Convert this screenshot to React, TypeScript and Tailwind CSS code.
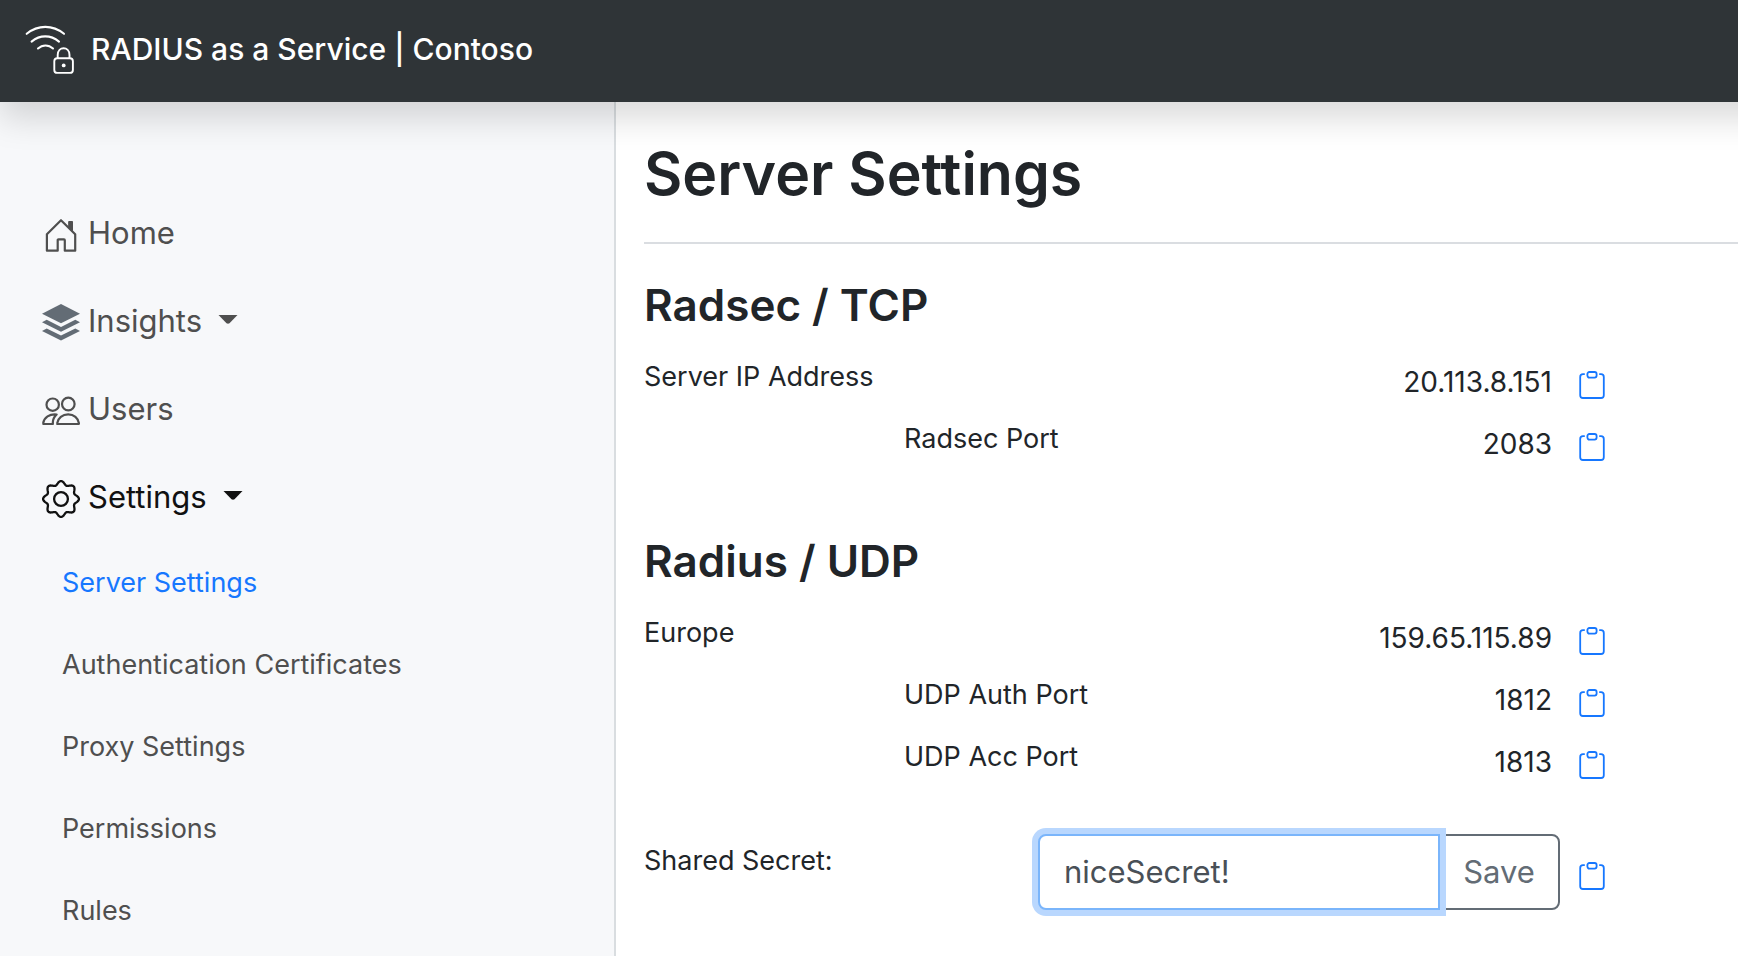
import { useState } from "react";
import type { ReactNode } from "react";

function LogoIcon() {
  return (
    <svg viewBox="0 0 52 50" className="h-[50px] w-[52px] shrink-0" fill="none" stroke="currentColor" strokeWidth="2.100" strokeLinecap="round" aria-hidden="true">
      <path d="M2.700 9.800C14 .6 28.600 .6 40 9.800" />
      <path d="M7.600 17.600C16 10.600 26.500 10.600 35 17.600" />
      <path d="M14 24.500C18.500 20.400 24.500 20.400 29 24.500" />
      <rect x="30.300" y="34.200" width="18.600" height="14.700" rx="3" strokeWidth="1.900" />
      <path d="M33.700 34V31C33.700 21.900 45.500 21.900 45.500 31V34" strokeWidth="1.900" />
      <circle cx="39.700" cy="41.400" r="1.900" fill="currentColor" stroke="none" />
    </svg>
  );
}

function HomeIcon() {
  return (
    <svg viewBox="0 0 38 38" className="size-[38px]" fill="none" stroke="currentColor" strokeWidth="2.200" strokeLinejoin="round" aria-hidden="true">
      <path d="M19 4.200L33.200 18.300V34.700H22.800V24.200C22.800 23.700 22.500 23.400 22 23.400H16.500C16 23.400 15.700 23.700 15.700 24.200V34.700H4.900V18.300Z" />
      <path d="M26.700 5.500H30.500V14.500L26.700 10.800Z" fill="currentColor" strokeWidth="1" />
    </svg>
  );
}

function LayersIcon() {
  return (
    <svg viewBox="0 0 38 38" className="size-[38px] text-[#636c75]" fill="currentColor" aria-hidden="true">
      <path d="M19 0L38 9.700L19 19.300L0 9.700Z" />
      <path d="M4.700 15.800L19 22.900L33.300 15.800L38 18.200L19 27.700L0 18.200Z" />
      <path d="M4.700 24.500L19 31.600L33.300 24.500L38 26.900L19 36.400L0 26.900Z" />
    </svg>
  );
}

function UsersIcon() {
  return (
    <svg viewBox="0 0 38 38" className="size-[38px]" fill="none" stroke="currentColor" strokeWidth="2.200" strokeLinejoin="round" aria-hidden="true">
      <circle cx="10.700" cy="12.700" r="6.200" />
      <circle cx="26.300" cy="12" r="6.300" />
      <path d="M15.500 32H36.300C36.800 32 37 31.700 36.900 31.200C36.200 26 31.900 22.400 26.200 22.400C20.500 22.400 15.900 26 15.200 31.200C15.100 31.700 15.200 32 15.500 32Z" />
      <path d="M14.600 22.500C7.500 21.800 2.100 25.400 1.200 31.200C1.100 31.700 1.300 32 1.800 32H10.900C10.500 28.500 11.700 25.200 14.600 22.500Z" />
    </svg>
  );
}

const gearOutline =
  Array.from({ length: 144 }, (_, i) => {
    const angle = (i * Math.PI) / 72;
    const radius = 16.1 + 1.8 * Math.cos(8 * angle);
    return `${i ? "L" : "M"}${(19 + radius * Math.sin(angle)).toFixed(2)} ${(19 - radius * Math.cos(angle)).toFixed(2)}`;
  }).join("") + "Z";

function GearIcon() {
  return (
    <svg viewBox="0 0 38 38" className="size-[38px]" fill="none" stroke="currentColor" strokeWidth="2.300" strokeLinejoin="round" aria-hidden="true">
      <path d={gearOutline} />
      <circle cx="19" cy="19" r="6.900" />
    </svg>
  );
}

function ClipboardIcon() {
  return (
    <svg viewBox="0 0 26 28" className="h-7 w-[26px]" fill="none" stroke="currentColor" strokeWidth="1.800" aria-hidden="true">
      <path d="M5.800 3.200H4C2.200 3.200 1.200 4.200 1.200 6V24.200C1.200 26 2.200 27 4 27H22C23.800 27 24.800 26 24.800 24.200V6C24.800 4.200 23.800 3.200 22 3.200H20.200" />
      <rect x="8.400" y="1" width="9.200" height="5.600" rx="2" />
    </svg>
  );
}

function Caret() {
  return (
    <svg viewBox="0 0 20 9" className="mb-1 ml-4 h-[9px] w-5" fill="currentColor" aria-hidden="true">
      <path d="M.5 0H19.500L11.500 8.300Q10 9 8.500 8.300Z" />
    </svg>
  );
}

const navItem = "flex h-[88px] w-full items-center pl-[42px] text-[31px] leading-10";

function NavContent({ icon, label }: { icon: ReactNode; label: string }) {
  return (
    <>
      <span className="mt-1">{icon}</span>
      <span className="ml-2">{label}</span>
    </>
  );
}

const settingsPages = ["Server Settings", "Authentication Certificates", "Proxy Settings", "Permissions", "Rules"];

function CopyButton({ label }: { label: string }) {
  return (
    <button type="button" aria-label={`Copy ${label}`} className="text-[#1677ff]">
      <ClipboardIcon />
    </button>
  );
}

function SettingRow({ label, value, nested = false }: { label: string; value: string; nested?: boolean }) {
  return (
    <div className="flex h-[62px] items-start">
      <dt className={nested ? "pt-[13px] pl-[260px]" : "pt-[13px]"}>{label}</dt>
      <dd className="ml-auto flex items-start gap-[27px] pt-[18px] text-[28px]">
        <span>{value}</span>
        <span className="flex pt-[9px]">
          <CopyButton label={label} />
        </span>
      </dd>
    </div>
  );
}

const sectionTitle = "text-[44px] leading-[58px] font-semibold";

export default function App() {
  const [secret, setSecret] = useState("niceSecret!");
  return (
    <div className="flex min-h-screen flex-col overflow-x-clip bg-white font-['Inter','Liberation_Sans',sans-serif] text-[#212529]">
      <header className="z-10 -mr-12 flex h-[102px] items-center gap-[15px] bg-[#2f3437] pb-1 pl-6 text-white shadow-[0_16px_32px_rgba(0,0,0,0.15)]">
        <LogoIcon />
        <span className="text-[30px] leading-10 font-medium">RADIUS as a Service | Contoso</span>
      </header>

      <div className="flex grow">
        <nav aria-label="Main" className="w-[616px] shrink-0 border-r-2 border-[#d9dde0] bg-[#f7f8fa] pt-[87px] text-[#4f4f4f]">
          <a href="#home" className={navItem}>
            <NavContent icon={<HomeIcon />} label="Home" />
          </a>
          <button type="button" className={navItem}>
            <NavContent icon={<LayersIcon />} label="Insights" />
            <Caret />
          </button>
          <a href="#users" className={navItem}>
            <NavContent icon={<UsersIcon />} label="Users" />
          </a>
          <button type="button" aria-expanded="true" className={`${navItem} text-[#111111]`}>
            <NavContent icon={<GearIcon />} label="Settings" />
            <Caret />
          </button>
          <ul className="pt-px text-[27px] leading-10">
            {settingsPages.map((page, i) => (
              <li key={page}>
                <a href="#settings" className={`flex h-[82px] items-center pl-[62px] ${i === 0 ? "text-[#1677ff]" : ""}`}>
                  {page}
                </a>
              </li>
            ))}
          </ul>
        </nav>

        <main className="grow pt-9 pl-7 text-[27px] leading-10">
          <h1 className="text-[59px] leading-[72px] font-semibold">Server Settings</h1>
          <hr className="mt-8 border-t-2 border-[#dadde1]" />

          <div className="pr-[133px]">
            <section className="mt-8">
              <h2 className={sectionTitle}>Radsec / TCP</h2>
              <dl className="mt-[10px]">
                <SettingRow label="Server IP Address" value="20.113.8.151" />
                <SettingRow label="Radsec Port" value="2083" nested />
              </dl>
            </section>

            <section className="mt-16">
              <h2 className={sectionTitle}>Radius / UDP</h2>
              <dl className="mt-[10px]">
                <SettingRow label="Europe" value="159.65.115.89" />
                <SettingRow label="UDP Auth Port" value="1812" nested />
                <SettingRow label="UDP Acc Port" value="1813" nested />
              </dl>
              <form className="mt-12 flex items-start" onSubmit={(e) => e.preventDefault()}>
                <label htmlFor="secret" className="pt-[7px]">
                  Shared Secret:
                </label>
                <div className="ml-auto flex h-[76px] text-[31px]">
                  <input
                    id="secret"
                    type="text"
                    value={secret}
                    onChange={(e) => setSecret(e.target.value)}
                    className="z-10 w-[402px] rounded-l-lg border-2 border-[#7ab5fb] bg-white px-6 text-[#495057] shadow-[0_0_0_6px_#b9d7fe] outline-none"
                  />
                  <button type="submit" className="-ml-0.5 w-[122px] rounded-r-lg border-2 border-[#636c75] text-[#636c75]">
                    Save
                  </button>
                </div>
                <span className="ml-[19px] flex pt-7">
                  <CopyButton label="Shared Secret" />
                </span>
              </form>
            </section>
          </div>
        </main>
      </div>
    </div>
  );
}
